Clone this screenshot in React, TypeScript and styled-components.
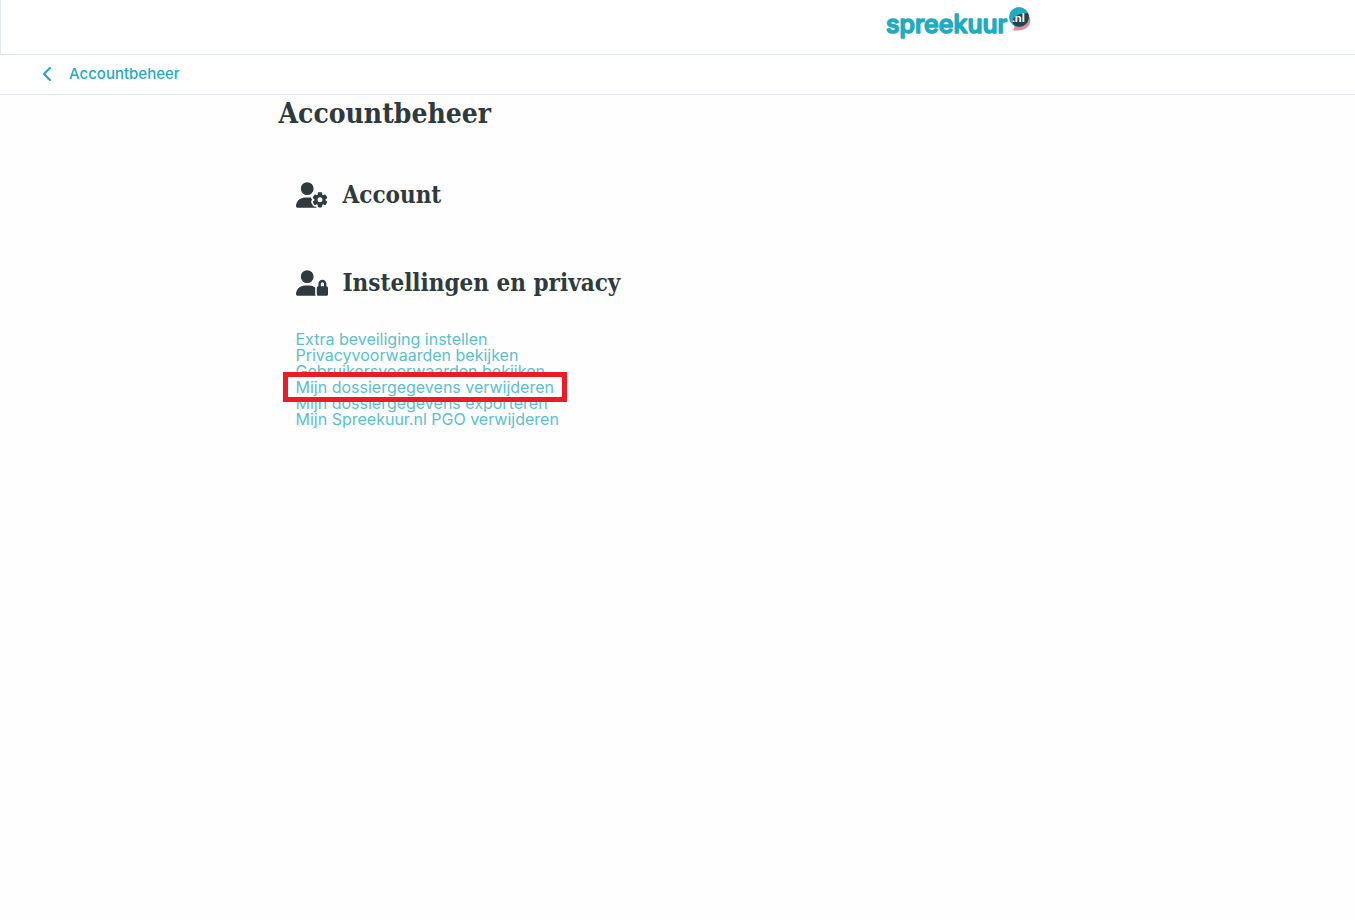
import React from "react";
import styled, { createGlobalStyle } from "styled-components";
import { FaUserGear, FaUserLock } from "react-icons/fa6";

const GlobalStyle = createGlobalStyle`
  * { box-sizing: border-box; }
  body {
    margin: 0;
    background: #fefefe;
    color: #2f3a3f;
    font-family: Inter, "Liberation Sans", sans-serif;
    font-size: 16px;
  }
`;

const Header = styled.header`
  height: 55px;
  background: #fff;
  border-left: 1px solid #dfe6ed;
  border-bottom: 1px solid #dfe6ed;
`;

const HeaderInner = styled.div`
  display: flex;
  justify-content: flex-end;
  max-width: 800px;
  margin: 0 auto;
  padding: 4px 47px 0 0;
`;

const LogoLink = styled.a`
  display: block;
  height: 40px;
`;

const BackBar = styled.nav`
  display: flex;
  align-items: center;
  height: 40px;
  padding: 0 40px 1px;
  background: #fff;
  border-bottom: 1px solid #dfe6ed;
`;

const BackLink = styled.a`
  display: flex;
  align-items: center;
  gap: 15px;
  color: #25abbf;
  font-size: 15px;
  font-weight: 500;
  line-height: 24px;
  text-decoration: none;
`;

const Main = styled.main`
  max-width: 798px;
  margin: 0 auto;
`;

const PageTitle = styled.h1`
  margin: 0;
  font: bold 28px/38px "DejaVu Serif Condensed", "DejaVu Serif", serif;
`;

const Sections = styled.div`
  display: flex;
  flex-direction: column;
  gap: 48px;
  padding: 42px 17px;
`;

const SectionHeading = styled.div`
  display: flex;
  align-items: center;
  gap: 15px;
  height: 40px;

  svg {
    width: 32px;
    height: 26px;
  }
`;

const SectionTitle = styled.h2`
  margin: 0;
  font: bold 24px/32px "DejaVu Serif Condensed", "DejaVu Serif", serif;
`;

const LinkList = styled.ul`
  margin: 0;
  padding: 28px 0 8px;
  list-style: none;
  line-height: 16px;
`;

const TextLink = styled.a<{ $marked?: boolean }>`
  color: #5bc0ce;
  text-decoration: none;

  ${(p) =>
    p.$marked &&
    `
    position: relative;
    z-index: 1;

    &::before {
      content: "";
      position: absolute;
      inset: -5px -13px;
      z-index: -1;
      background: #fff;
      border: 5px solid #ed1c24;
    }`}
`;

const links = [
  { label: "Extra beveiliging instellen" },
  { label: "Privacyvoorwaarden bekijken" },
  { label: "Gebruikersvoorwaarden bekijken" },
  { label: "Mijn dossiergegevens verwijderen", marked: true },
  { label: "Mijn dossiergegevens exporteren" },
  { label: "Mijn Spreekuur.nl PGO verwijderen" },
];

function Logo() {
  return (
    <svg width="146" height="40" viewBox="0 0 146 40" role="img" aria-label="spreekuur.nl">
      <text
        x="1"
        y="29"
        fontFamily="Inter, sans-serif"
        fontWeight="500"
        fontSize="25"
        fill="#22abc0"
        stroke="#22abc0"
        strokeWidth="1.6"
        strokeLinejoin="round"
      >
        spreekuur
      </text>
      <path d="M143 10 C149 18 143 29 127 26 C129 25 130 24 129 22 Z" fill="#de8a93" />
      <circle cx="134" cy="13" r="10" fill="#22abc0" />
      <path d="M143 9 C147 19 136 26 129 21 C124 15 132 9 143 9 Z" fill="#25424e" />
      <text x="127" y="18" fontFamily="Lato, sans-serif" fontWeight="900" fontSize="12" fill="#fff">
        .nl
      </text>
    </svg>
  );
}

export default function App() {
  return (
    <>
      <GlobalStyle />
      <Header>
        <HeaderInner>
          <LogoLink href="#">
            <Logo />
          </LogoLink>
        </HeaderInner>
      </Header>
      <BackBar>
        <BackLink href="#">
          <svg width="14" height="16" viewBox="0 0 14 16" fill="none" aria-hidden="true">
            <path d="M10 2 L4 8 L10 14" stroke="currentColor" strokeWidth="2.2" strokeLinecap="round" strokeLinejoin="round" />
          </svg>
          Accountbeheer
        </BackLink>
      </BackBar>
      <Main>
        <PageTitle>Accountbeheer</PageTitle>
        <Sections>
          <section>
            <SectionHeading>
              <FaUserGear aria-hidden />
              <SectionTitle>Account</SectionTitle>
            </SectionHeading>
          </section>
          <section>
            <SectionHeading>
              <FaUserLock aria-hidden />
              <SectionTitle>Instellingen en privacy</SectionTitle>
            </SectionHeading>
            <LinkList>
              {links.map((l) => (
                <li key={l.label}>
                  <TextLink href="#" $marked={l.marked}>
                    {l.label}
                  </TextLink>
                </li>
              ))}
            </LinkList>
          </section>
        </Sections>
      </Main>
    </>
  );
}
